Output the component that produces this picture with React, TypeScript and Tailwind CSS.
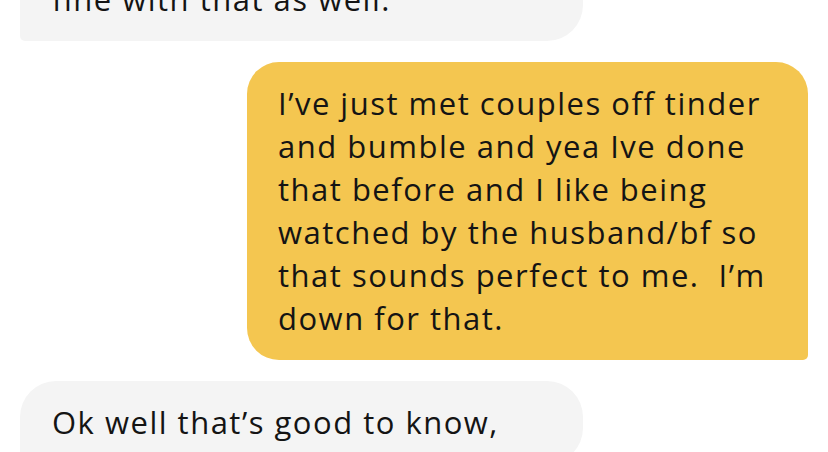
import React from 'react'

type Msg = { id: number; mine: boolean; lines: string[] }

const messages: Msg[] = [
  { id: 1, mine: false, lines: ['fine with that as well.'] },
  {
    id: 2,
    mine: true,
    lines: [
      'I’ve just met couples off tinder',
      'and bumble and yea Ive done',
      'that before and I like being',
      'watched by the husband/bf so',
      'that sounds perfect to me.  I’m',
      'down for that.',
    ],
  },
  { id: 3, mine: false, lines: ['Ok well that’s good to know,'] },
]

function Bubble({ msg }: { msg: Msg }) {
  const shape = msg.mine
    ? 'self-end bg-[#f4c650] rounded-[32px] rounded-br-[5px] w-[561px] pl-[31px]'
    : 'self-start bg-[#f4f4f4] rounded-[36px] rounded-bl-[5px] w-[563px] pl-[32px]'
  return (
    <div className={`${shape} pr-3 py-[20px]`}>
      {msg.lines.map((l, i) => (
        <div key={i} className="whitespace-pre">{l}</div>
      ))}
    </div>
  )
}

export default function App() {
  return (
    <div className="w-[828px] h-[452px] overflow-hidden bg-white">
      <div
        className="flex flex-col gap-[21px] pl-5 pr-5 mt-[-42px] text-[31px] leading-[43px] tracking-[1.5px] text-[#141414]"
        style={{ fontFamily: '"Open Sans", "Noto Sans", sans-serif' }}
      >
        {messages.map(m => <Bubble key={m.id} msg={m} />)}
      </div>
    </div>
  )
}
